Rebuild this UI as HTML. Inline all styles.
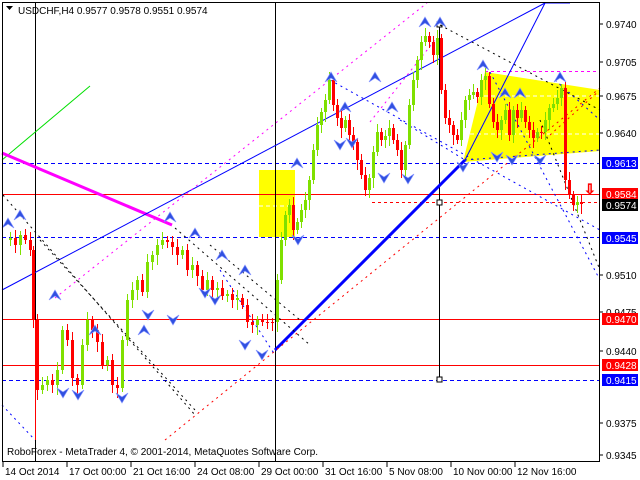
<!DOCTYPE html>
<html><head><meta charset="utf-8"><style>
html,body{margin:0;padding:0;background:#fff;width:640px;height:480px;overflow:hidden}
svg{display:block;font-family:"Liberation Sans",sans-serif;font-size:10px}
</style></head><body>
<svg id="s" width="640" height="480" viewBox="0 0 640 480" xmlns="http://www.w3.org/2000/svg">
<rect width="640" height="480" fill="#fff"/>
<rect x="259" y="170" width="36" height="67" fill="#ffff00"/>
<polygon points="463,162 485,72 600,90 600,151" fill="#ffff00"/>
<g stroke="#fff" stroke-dasharray="4,3" stroke-width="1">
<line x1="470" y1="96" x2="600" y2="96"/><line x1="470" y1="134" x2="600" y2="134"/>
<line x1="259" y1="206" x2="295" y2="206"/>
</g>
<g stroke-width="1">
<line x1="2" y1="194.5" x2="600" y2="194.5" stroke="#f00"/>
<line x1="2" y1="319.5" x2="600" y2="319.5" stroke="#f00"/>
<line x1="2" y1="365.5" x2="600" y2="365.5" stroke="#f00"/>
<line x1="2" y1="163.5" x2="600" y2="163.5" stroke="#00f" stroke-dasharray="4,3"/>
<line x1="2" y1="237.5" x2="600" y2="237.5" stroke="#00f" stroke-dasharray="4,3"/>
<line x1="2" y1="380.5" x2="600" y2="380.5" stroke="#00f" stroke-dasharray="4,3"/>
<line x1="372" y1="202.5" x2="600" y2="202.5" stroke="#f00" stroke-dasharray="3,3"/>
<line x1="485" y1="71.5" x2="600" y2="71.5" stroke="#f0f" stroke-dasharray="3,3"/>
</g>
<g stroke="#000">
<line x1="35.5" y1="3" x2="35.5" y2="462"/>
<line x1="275.5" y1="3" x2="275.5" y2="462"/>
<line x1="439.5" y1="24" x2="439.5" y2="380"/>
</g>
<rect x="437" y="377" width="5" height="5" fill="#fff" stroke="#000"/>
<rect x="437" y="200" width="5" height="5" fill="#fff" stroke="#000"/>
<rect x="437" y="22" width="5" height="5" fill="#fff" stroke="#000"/>
<line x1="2" y1="160" x2="90" y2="86" stroke="#00e000"/>
<line x1="2" y1="153" x2="172" y2="225" stroke="#f0f" stroke-width="3"/>
<line x1="2" y1="290" x2="545" y2="3" stroke="#00f"/>
<line x1="275" y1="350" x2="465" y2="160" stroke="#00f" stroke-width="3"/>
<line x1="465" y1="160" x2="545" y2="3" stroke="#00f"/>
<line x1="545" y1="3" x2="570" y2="3" stroke="#00f"/>
<g stroke-dasharray="2,4" fill="none">
<line x1="55" y1="298" x2="427" y2="3" stroke="#f0f"/>
<line x1="370" y1="122" x2="435" y2="40" stroke="#f0f"/>
<line x1="165" y1="440" x2="600" y2="88" stroke="#f00"/>
<line x1="440" y1="25" x2="600" y2="110" stroke="#000"/>
<line x1="3" y1="195" x2="195" y2="415" stroke="#000"/>
<line x1="40" y1="240" x2="195" y2="410" stroke="#000"/>
<line x1="175" y1="228" x2="310" y2="345" stroke="#000"/>
<line x1="210" y1="245" x2="300" y2="320" stroke="#000"/>
<line x1="2" y1="405" x2="35" y2="440" stroke="#00f"/>
<line x1="330" y1="80" x2="600" y2="230" stroke="#00f"/>
<line x1="400" y1="120" x2="465" y2="160" stroke="#00f"/>
<line x1="490" y1="72" x2="600" y2="280" stroke="#00f"/>
<line x1="465" y1="160" x2="600" y2="150" stroke="#00f"/>
<line x1="555" y1="80" x2="600" y2="120" stroke="#00f"/>
<line x1="540" y1="120" x2="600" y2="270" stroke="#000"/>
<line x1="550" y1="135" x2="600" y2="90" stroke="#f00"/>
<line x1="220" y1="270" x2="275" y2="355" stroke="#00f"/>
</g>
<line x1="35.5" y1="320" x2="35.5" y2="440" stroke="#f00"/>
<g id="c"></g>
<g id="a"></g>
<text x="584" y="194" fill="none" stroke="#f00" stroke-width="0.8" font-size="14">⇩</text>
<rect x="2.5" y="2.5" width="597" height="459" fill="none" stroke="#000"/>
<polygon points="6,6 13,6 9.5,10" fill="#000"/>
<text x="18" y="14" fill="#000">USDCHF,H4  0.9577 0.9578 0.9551 0.9574</text>
<text x="7" y="455" fill="#000">RoboForex - MetaTrader 4, © 2001-2014, MetaQuotes Software Corp.</text>
<g id="ax" fill="#000"></g>
</svg>
<script>
var NS="http://www.w3.org/2000/svg";
function el(p,t,a,txt){var e=document.createElementNS(NS,t);for(var k in a)e.setAttribute(k,a[k]);if(txt)e.textContent=txt;p.appendChild(e);return e;}
var pts=[[5,240],[10,238],[15,245],[20,235],[25,240],[30,250],[33,320],[37,390],[42,385],[47,380],[52,385],[57,370],[62,330],[67,340],[72,378],[77,385],[82,345],[87,320],[92,330],[97,342],[102,365],[107,360],[112,385],[117,388],[122,340],[127,300],[132,290],[137,280],[142,292],[147,262],[152,255],[157,245],[162,240],[167,242],[172,247],[177,255],[182,250],[187,270],[192,265],[197,276],[202,290],[207,280],[212,290],[217,288],[222,296],[227,294],[232,300],[237,298],[242,305],[247,322],[252,325],[257,320],[262,322],[267,322],[272,322],[277,280],[281,240],[285,215],[289,205],[293,230],[297,222],[301,210],[305,200],[309,180],[313,150],[317,125],[321,112],[325,100],[329,80],[333,105],[337,118],[341,128],[345,120],[349,135],[353,142],[357,160],[361,175],[365,190],[369,178],[373,152],[377,132],[381,140],[385,136],[389,128],[393,140],[397,150],[401,170],[405,145],[409,105],[413,80],[417,60],[421,42],[425,36],[429,42],[433,55],[437,38],[441,90],[445,118],[449,125],[453,135],[457,140],[461,120],[465,100],[469,95],[473,92],[477,97],[481,80],[485,76],[489,104],[493,122],[497,130],[501,120],[505,110],[509,135],[513,110],[517,118],[521,110],[525,122],[529,130],[533,138],[537,132],[541,132],[545,120],[549,108],[553,104],[557,98],[561,88],[565,180],[569,195],[573,205],[577,202],[581,204]];
var g=document.getElementById("c");
for(var i=1;i<pts.length;i++){var x=pts[i][0],o=pts[i-1][1],c=pts[i][1];var up=c<o;var col=up?"#7fe000":"#f00";var t=Math.min(o,c),b=Math.max(o,c);if(b-t<1)b=t+1;
el(g,"line",{x1:x+.5,x2:x+.5,y1:t-4-(i%3)*2,y2:b+4+(i%4)*2,stroke:col});
el(g,"rect",{x:x-1,y:t,width:3,height:b-t,fill:col});}
var ua=[[8,218],[20,210],[55,290],[95,325],[144,325],[170,212],[195,228],[222,250],[245,265],[297,158],[331,72],[345,102],[375,72],[392,102],[425,17],[440,17],[483,60],[505,88],[520,88],[560,72]];
var da=[[63,398],[78,400],[122,403],[148,320],[173,325],[205,298],[215,305],[245,350],[262,360],[298,245],[340,150],[352,148],[384,183],[408,184],[463,172],[497,162],[512,165],[540,165]];
var ag=document.getElementById("a");
ua.forEach(function(p){el(ag,"polygon",{points:(p[0]-6)+","+(p[1]+10)+" "+p[0]+","+p[1]+" "+(p[0]+6)+","+(p[1]+10)+" "+p[0]+","+(p[1]+6),fill:"#3050e0",stroke:"#8090ff","stroke-width":"0.7"});});
da.forEach(function(p){el(ag,"polygon",{points:(p[0]-6)+","+(p[1]-10)+" "+p[0]+","+p[1]+" "+(p[0]+6)+","+(p[1]-10)+" "+p[0]+","+(p[1]-6),fill:"#3050e0",stroke:"#8090ff","stroke-width":"0.7"});});
var ax=document.getElementById("ax");
[["0.9740",24],["0.9705",62],["0.9675",96],["0.9640",133],["0.9510",275],["0.9475",312],["0.9440",351],["0.9375",423],["0.9345",455]].forEach(function(l){el(ax,"line",{x1:600,x2:603,y1:l[1],y2:l[1],stroke:"#000"});el(ax,"text",{x:606,y:l[1]+4},l[0]);});
[["0.9613",163,"#0000ff"],["0.9584",194,"#f00"],["0.9574",205,"#000"],["0.9545",238,"#0000ff"],["0.9470",319,"#f00"],["0.9428",365,"#f00"],["0.9415",380,"#0000ff"]].forEach(function(l){el(ax,"rect",{x:602,y:l[1]-6,width:36,height:12,fill:l[2]});el(ax,"text",{x:606,y:l[1]+4,fill:"#fff"},l[0]);});
[["14 Oct 2014",3],["17 Oct 00:00",67],["21 Oct 16:00",131],["24 Oct 08:00",195],["29 Oct 00:00",259],["31 Oct 16:00",323],["5 Nov 08:00",387],["10 Nov 00:00",451],["12 Nov 16:00",515]].forEach(function(l){el(ax,"line",{x1:l[1],x2:l[1],y1:462,y2:467,stroke:"#000"});el(ax,"text",{x:l[1]+2,y:475},l[0]);});
</script>
</body></html>
